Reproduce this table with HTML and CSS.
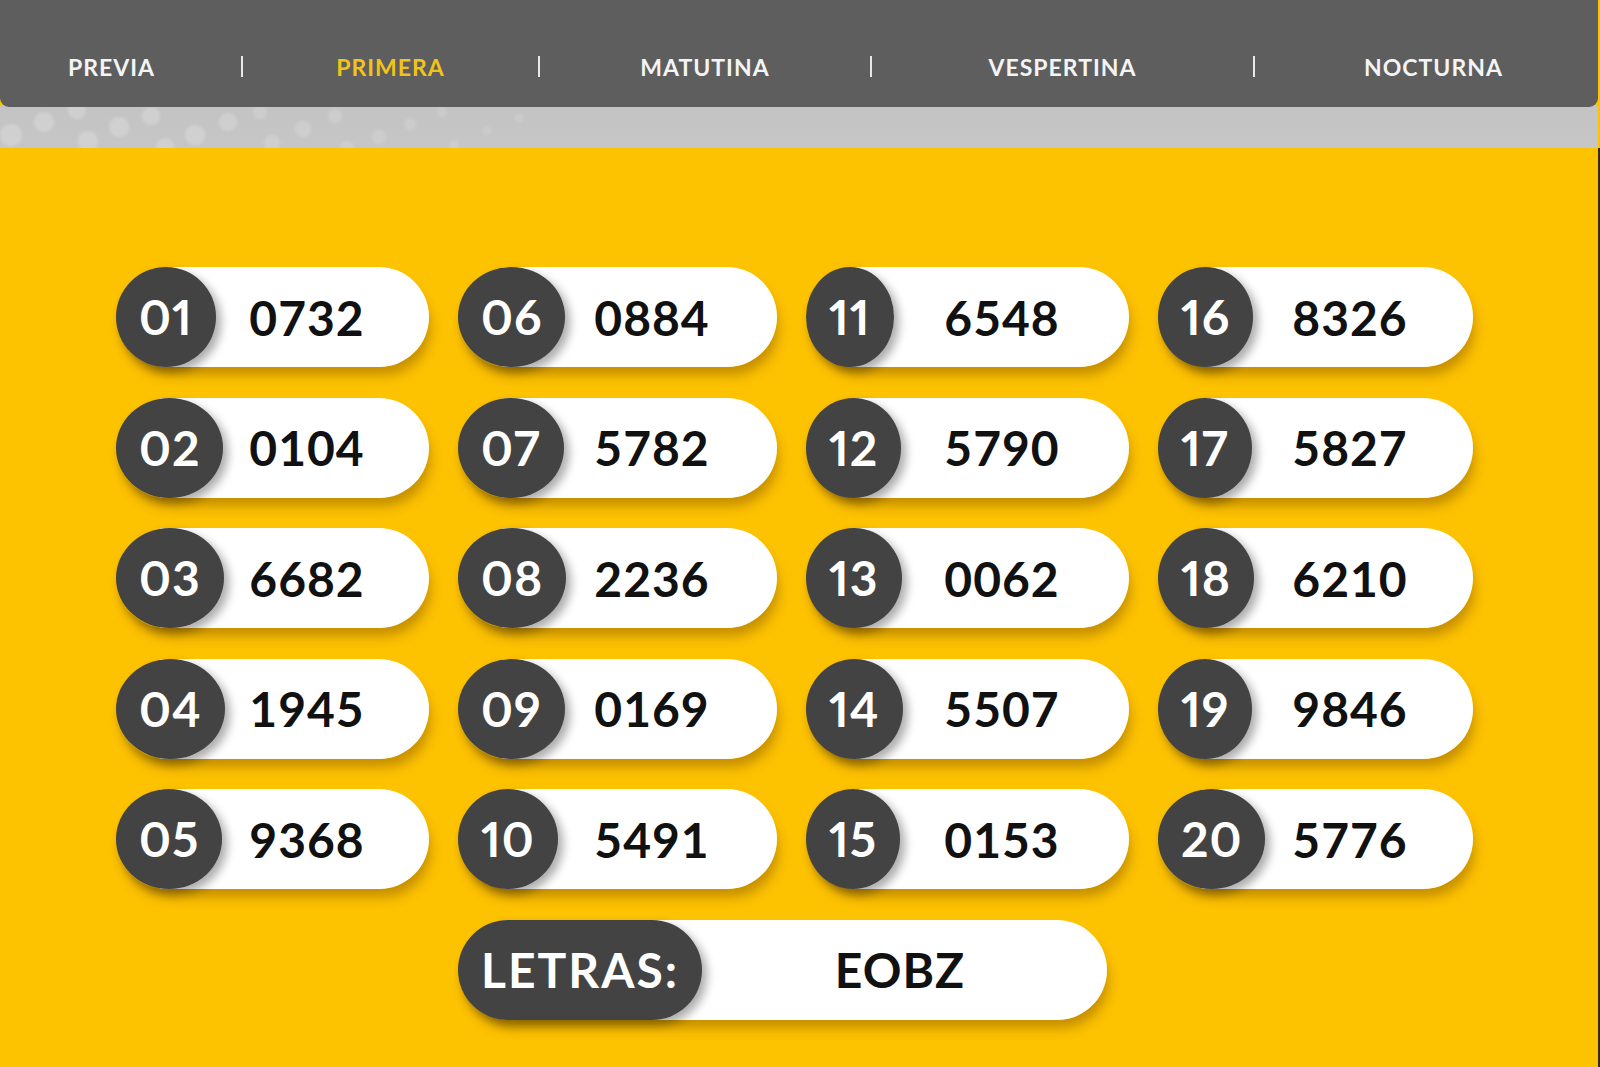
FILE: index.html
```html
<!DOCTYPE html>
<html lang="es">
<head>
<meta charset="utf-8">
<title>Quiniela - Primera</title>
<link rel="stylesheet" href="styles.css">
</head>
<body>
<header class="topbar">
  <nav class="nav">
    <a class="nav-item first">PREVIA</a>
    <span class="sep"></span>
    <a class="nav-item active">PRIMERA</a>
    <span class="sep"></span>
    <a class="nav-item">MATUTINA</a>
    <span class="sep"></span>
    <a class="nav-item">VESPERTINA</a>
    <span class="sep"></span>
    <a class="nav-item last">NOCTURNA</a>
  </nav>
</header>
<div class="band"></div>
<main class="board">
  <div class="grid">
    <div class="pill"><span class="badge">01</span><span class="num">0732</span></div>
    <div class="pill"><span class="badge">06</span><span class="num">0884</span></div>
    <div class="pill"><span class="badge">11</span><span class="num">6548</span></div>
    <div class="pill"><span class="badge">16</span><span class="num">8326</span></div>

    <div class="pill"><span class="badge">02</span><span class="num">0104</span></div>
    <div class="pill"><span class="badge">07</span><span class="num">5782</span></div>
    <div class="pill"><span class="badge">12</span><span class="num">5790</span></div>
    <div class="pill"><span class="badge">17</span><span class="num">5827</span></div>

    <div class="pill"><span class="badge">03</span><span class="num">6682</span></div>
    <div class="pill"><span class="badge">08</span><span class="num">2236</span></div>
    <div class="pill"><span class="badge">13</span><span class="num">0062</span></div>
    <div class="pill"><span class="badge">18</span><span class="num">6210</span></div>

    <div class="pill"><span class="badge">04</span><span class="num">1945</span></div>
    <div class="pill"><span class="badge">09</span><span class="num">0169</span></div>
    <div class="pill"><span class="badge">14</span><span class="num">5507</span></div>
    <div class="pill"><span class="badge">19</span><span class="num">9846</span></div>

    <div class="pill"><span class="badge">05</span><span class="num">9368</span></div>
    <div class="pill"><span class="badge">10</span><span class="num">5491</span></div>
    <div class="pill"><span class="badge">15</span><span class="num">0153</span></div>
    <div class="pill"><span class="badge">20</span><span class="num">5776</span></div>

    <div class="pill letras"><span class="badge wide">LETRAS:</span><span class="num">EOBZ</span></div>
  </div>
</main>
</body>
</html>
```
FILE: styles.css
```css
html, body {
  margin: 0;
  padding: 0;
}
body {
  width: 1600px;
  height: 1067px;
  overflow: hidden;
  background: #fdc200;
  font-family: Lato, "Liberation Sans", sans-serif;
}

.topbar {
  height: 107px;
  width: 1598px;
  background: #5e5e5e;
  border-radius: 0 0 9px 9px;
  position: relative;
  z-index: 2;
}
.nav {
  display: grid;
  grid-template-columns: 241px 2px 295px 2px 330px 2px 381px 2px 1fr;
  align-items: center;
  height: 81px;
  padding-top: 26px;
}
.nav-item {
  text-align: center;
  color: #f4f4f4;
  font-weight: 700;
  font-size: 23px;
  letter-spacing: 1px;
}
.nav-item.first { padding-right: 18px; }
.nav-item.last { padding-left: 14px; }
.nav-item.active { color: #f2c318; }
.sep {
  width: 2px;
  height: 21px;
  background: #e8e8e8;
}

.band {
  height: 41px;
  margin-top: -2px;
  background:
    radial-gradient(circle at 11px 30px, rgba(255,255,255,.2) 9px, transparent 13px),
    radial-gradient(circle at 44px 17px, rgba(255,255,255,.2) 8px, transparent 12px),
    radial-gradient(circle at 77px 5px, rgba(255,255,255,.2) 7px, transparent 11px),
    radial-gradient(circle at 88px 36px, rgba(255,255,255,.2) 8px, transparent 12px),
    radial-gradient(circle at 119px 22px, rgba(255,255,255,.2) 8px, transparent 12px),
    radial-gradient(circle at 151px 11px, rgba(255,255,255,.2) 7px, transparent 11px),
    radial-gradient(circle at 165px 42px, rgba(255,255,255,.18) 7px, transparent 11px),
    radial-gradient(circle at 195px 30px, rgba(255,255,255,.2) 8px, transparent 12px),
    radial-gradient(circle at 228px 17px, rgba(255,255,255,.18) 7px, transparent 11px),
    radial-gradient(circle at 260px 7px, rgba(255,255,255,.16) 5px, transparent 9px),
    radial-gradient(circle at 272px 38px, rgba(255,255,255,.16) 6px, transparent 10px),
    radial-gradient(circle at 303px 24px, rgba(255,255,255,.16) 6px, transparent 10px),
    radial-gradient(circle at 335px 11px, rgba(255,255,255,.15) 5px, transparent 9px),
    radial-gradient(circle at 347px 43px, rgba(255,255,255,.15) 5px, transparent 9px),
    radial-gradient(circle at 379px 32px, rgba(255,255,255,.14) 5px, transparent 9px),
    radial-gradient(circle at 410px 19px, rgba(255,255,255,.13) 4px, transparent 8px),
    radial-gradient(circle at 442px 7px, rgba(255,255,255,.12) 3px, transparent 7px),
    radial-gradient(circle at 454px 40px, rgba(255,255,255,.12) 3px, transparent 7px),
    radial-gradient(circle at 487px 26px, rgba(255,255,255,.1) 3px, transparent 6px),
    radial-gradient(circle at 519px 13px, rgba(255,255,255,.1) 3px, transparent 6px),
    linear-gradient(#c3c3c3, #c6c6c6);
  width: 1598px;
  padding-top: 2px;
}

.board {
  padding-top: 119px;
  height: 800px;
  border-right: 2px solid #3a2a08;
  width: 1598px;
}
.grid {
  display: grid;
  grid-template-columns: 313px 319px 323px 315px;
  grid-auto-rows: 100px;
  column-gap: 29px;
  row-gap: 30.5px;
  margin-left: 116px;
}

.pill {
  display: grid;
  grid-template-columns: 100px 1fr;
  align-items: center;
  height: 100px;
  background: linear-gradient(to right, transparent 44px, #fff 44px);
  border-radius: 50px;
  box-shadow: 4px 11px 12px -3px rgba(120, 72, 0, 0.42);
}
.badge {
  justify-self: start;
  height: 100px;
  line-height: 100px;
  padding: 0 23px;
  border-radius: 50%;
  background: #434343;
  color: #fff;
  font-weight: 700;
  font-size: 48px;
  letter-spacing: 1px;
  font-variant-numeric: proportional-nums;
  box-shadow: 5px 5px 10px rgba(0, 0, 0, 0.33);
  white-space: nowrap;
  position: relative;
  z-index: 1;
}
.num {
  text-align: center;
  padding-right: 31px;
  color: #111;
  font-weight: 700;
  font-size: 48px;
  letter-spacing: 1px;
  white-space: nowrap;
}

.letras {
  grid-column: 2 / 4;
  width: 649px;
  grid-template-columns: 247px 1fr;
}
.badge.wide {
  border-radius: 50px;
  letter-spacing: 2px;
}
.letras .num {
  padding-right: 12px;
}
```
